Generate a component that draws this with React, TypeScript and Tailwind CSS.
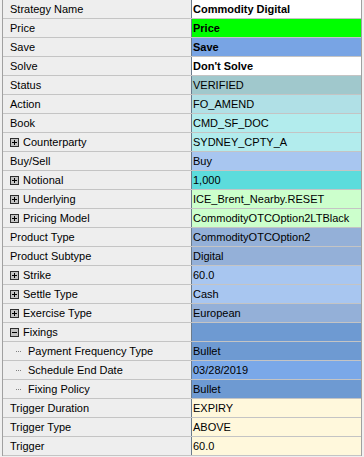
type Row = {
  label: string;
  value: string;
  bg: string;
  bold?: boolean;
  kind?: 'plus' | 'minus' | 'child';
};

const rows: Row[] = [
  { label: 'Strategy Name', value: 'Commodity Digital', bg: 'bg-white', bold: true },
  { label: 'Price', value: 'Price', bg: 'bg-[#00ff00]', bold: true },
  { label: 'Save', value: 'Save', bg: 'bg-[#78a4e4]', bold: true },
  { label: 'Solve', value: "Don't Solve", bg: 'bg-white', bold: true },
  { label: 'Status', value: 'VERIFIED', bg: 'bg-[#a0c8cc]' },
  { label: 'Action', value: 'FO_AMEND', bg: 'bg-[#b0e0e6]' },
  { label: 'Book', value: 'CMD_SF_DOC', bg: 'bg-[#b2eced]' },
  { label: 'Counterparty', value: 'SYDNEY_CPTY_A', bg: 'bg-[#b2eced]', kind: 'plus' },
  { label: 'Buy/Sell', value: 'Buy', bg: 'bg-[#a8c6f0]' },
  { label: 'Notional', value: '1,000', bg: 'bg-[#5cdcdc]', kind: 'plus' },
  { label: 'Underlying', value: 'ICE_Brent_Nearby.RESET', bg: 'bg-[#ccffcc]', kind: 'plus' },
  { label: 'Pricing Model', value: 'CommodityOTCOption2LTBlack', bg: 'bg-[#ccffcc]', kind: 'plus' },
  { label: 'Product Type', value: 'CommodityOTCOption2', bg: 'bg-[#94b0d8]' },
  { label: 'Product Subtype', value: 'Digital', bg: 'bg-[#94b0d8]' },
  { label: 'Strike', value: '60.0', bg: 'bg-[#a8c6f0]', kind: 'plus' },
  { label: 'Settle Type', value: 'Cash', bg: 'bg-[#a8c6f0]', kind: 'plus' },
  { label: 'Exercise Type', value: 'European', bg: 'bg-[#94b0d8]', kind: 'plus' },
  { label: 'Fixings', value: '', bg: 'bg-[#6e9ad2]', kind: 'minus' },
  { label: 'Payment Frequency Type', value: 'Bullet', bg: 'bg-[#6e9ad2]', kind: 'child' },
  { label: 'Schedule End Date', value: '03/28/2019', bg: 'bg-[#7aa8e8]', kind: 'child' },
  { label: 'Fixing Policy', value: 'Bullet', bg: 'bg-[#6e9ad2]', kind: 'child' },
  { label: 'Trigger Duration', value: 'EXPIRY', bg: 'bg-[#fff8dc]' },
  { label: 'Trigger Type', value: 'ABOVE', bg: 'bg-[#fff8dc]' },
  { label: 'Trigger', value: '60.0', bg: 'bg-[#fff8dc]' },
];

function ToggleBox({ open }: { open: boolean }) {
  return (
    <svg width="9" height="9" viewBox="0 0 9 9" className="mr-[4px] shrink-0">
      <rect x="0.5" y="0.5" width="8" height="8" fill="#c4c4c4" stroke="#2e2e2e" />
      <line x1="2" y1="4.5" x2="7" y2="4.5" stroke="#000" />
      {!open && <line x1="4.5" y1="2" x2="4.5" y2="7" stroke="#000" />}
    </svg>
  );
}

function Label({ row }: { row: Row }) {
  if (row.kind === 'child') {
    return (
      <div className="flex items-center pl-[13px]">
        <span className="flex gap-[1px] mr-[7px]">
          <span className="w-[1px] h-[1px] bg-[#808080]" />
          <span className="w-[1px] h-[1px] bg-[#808080]" />
          <span className="w-[1px] h-[1px] bg-[#808080]" />
        </span>
        <span>{row.label}</span>
      </div>
    );
  }
  return (
    <div className="flex items-center pl-[7px]">
      {row.kind && <ToggleBox open={row.kind === 'minus'} />}
      <span>{row.label}</span>
    </div>
  );
}

export default function App() {
  return (
    <div
      className="w-[364px] h-[457px] bg-[#f0f0f0] text-[11px] text-black overflow-hidden"
      style={{ fontFamily: '"Liberation Sans", Arial, sans-serif' }}
    >
      <div className="ml-[2px] mr-[2px] border-l border-r border-[#a0a0a0]">
        {rows.map((row) => (
          <div key={row.label} className="flex h-[19px] border-b border-[#c4c4c4]">
            <div className="w-[188px] bg-[#eeeeee] flex items-center">
              <Label row={row} />
            </div>
            <div
              className={`flex-1 flex items-center pl-[1px] border-l border-[#6b7b8c] ${row.bg} ${
                row.bold ? 'font-bold' : ''
              }`}
            >
              {row.value}
            </div>
          </div>
        ))}
      </div>
    </div>
  );
}
